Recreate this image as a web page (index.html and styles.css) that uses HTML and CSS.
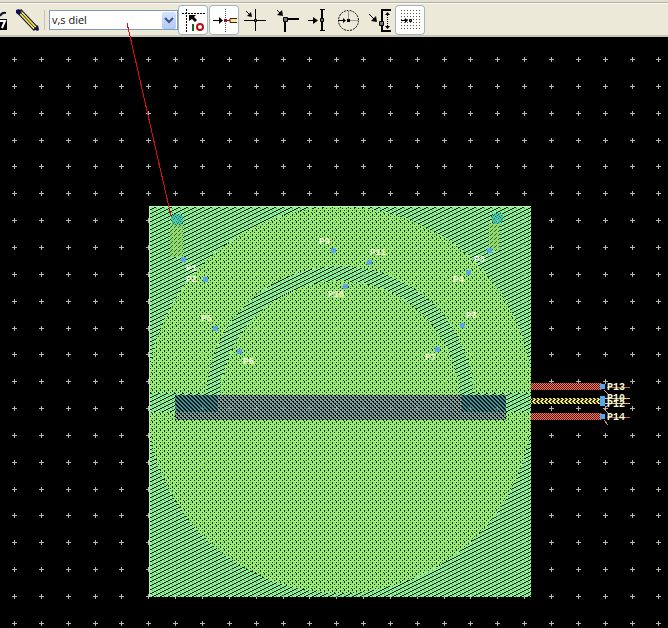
FILE: index.html
```html
<!DOCTYPE html>
<html lang="en">
<head>
<meta charset="utf-8">
<title>Layout editor</title>
<link rel="stylesheet" href="styles.css">
</head>
<body>
<header class="toolbar">
  <button class="tool tool-cut" aria-label="Layer 7"><svg width="8" height="30"><path d="M0 11q2-4 6-3" fill="none" stroke="#113" stroke-width="2"/><path d="M0 14h7v11H0z" fill="#000"/><path d="M0 16h5l-3 7" fill="none" stroke="#fff" stroke-width="2"/></svg></button>
  <button class="tool tool-pencil" aria-label="Draw"><svg width="24" height="30"><path d="M3 6L20 24" stroke="#113" stroke-width="6"/><path d="M4 7L19 23" stroke="#f1e65c" stroke-width="4"/><path d="M4 7L19 23" stroke="#332" stroke-width="1"/><path d="M0 5l3-1 3 3-3 3-3-2zM18 24l4-4 1 5-2 1z" fill="#115"/></svg></button>
  <label class="layer-picker">
    <select aria-label="Entry layer"><option>v,s diel</option></select>
    <svg class="chevron" width="14" height="17"><path d="M3 6l4 4 4-4" fill="none" stroke="#3f5680" stroke-width="2"/></svg>
  </label>
  <div class="snaps">
    <button class="tool active" aria-label="Snap enabled"><svg width="30" height="30"><path d="M4 8.500h24M8.500 4v24" stroke="#000" stroke-dasharray="2 1"/><path d="M11 10h7l-2 2 3 3-2 2-3-3-3 2z"/><path d="M15 19v7" stroke="#186418" stroke-width="2"/><circle cx="22" cy="22" r="3" fill="none" stroke="#b51218" stroke-width="2"/></svg></button>
    <button class="tool active" aria-label="Pin snap"><svg width="30" height="30"><path d="M4 15.500h8" stroke="#000"/><path d="M10 12l4 3.500-4 3.500z"/><path d="M16.500 4v24" stroke="#555" stroke-dasharray="1 1"/><path d="M17 15.500h4" stroke="#812"/><path d="M15 14h3v3h-3z" fill="#812"/><path d="M28 13.500h-7v4h7" fill="#f6e79b" stroke="#421"/></svg></button>
    <button class="tool" aria-label="Vertex snap"><svg width="30" height="30"><path d="M4 15.500h22M15.500 4v22M6 6l5 5" stroke="#000" fill="none"/><path d="M12 12l-5-1 4-4z"/><path d="M14.500 14.500h2v2h-2z" fill="#777" stroke="#000"/></svg></button>
    <button class="tool" aria-label="Corner snap"><svg width="30" height="30"><path d="M28 14H14v13" stroke="#000" stroke-width="2" fill="none"/><path d="M6 5l4 4" stroke="#000"/><path d="M12 11l-6-1 5-5z"/><path d="M12.500 12.500h4v4h-4z" fill="#777" stroke="#000"/></svg></button>
    <button class="tool" aria-label="Edge snap"><svg width="30" height="30"><path d="M6 15.500h6" stroke="#000"/><path d="M11 12l5 3.500-5 3.500z"/><path d="M20 4v22" stroke="#000" stroke-width="2"/><path d="M18 4.500h5M18 25.500h5" stroke="#000"/><path d="M18.500 13.500h3v3h-3z" fill="#777" stroke="#000"/></svg></button>
    <button class="tool" aria-label="Center snap"><svg width="30" height="30"><circle cx="15.500" cy="15.500" r="10" fill="none" stroke="#000" stroke-dasharray="2 1"/><path d="M15.500 5v10.500H26" fill="none" stroke="#999"/><path d="M5 15.500h6" stroke="#000"/><path d="M10 13l3 2.500-3 2.500zM14 14h3v3h-3z"/></svg></button>
    <button class="tool" aria-label="Intersect snap"><svg width="30" height="30"><path d="M27 5H18v21h9" stroke="#000" stroke-width="2" fill="none"/><path d="M5 9l6 6" stroke="#000"/><path d="M13 17l-6-1 5-5z"/><path d="M15.500 16.500h4v4h-4z" fill="#777" stroke="#000"/><path d="M23.500 8v15" stroke="#000" stroke-dasharray="1 1"/><path d="M21 10l2.500-3 2.500 3zM21 21l2.500 3 2.500-3z"/></svg></button>
    <button class="tool active" aria-label="Grid snap"><svg width="30" height="30"><path d="M6 5.500h20M6 8.500h20M6 11.500h20M6 14.500h20M6 17.500h20M6 20.500h20M6 23.500h20" stroke="#555" stroke-dasharray="1 2"/><path d="M6 15.500h5" stroke="#000"/><path d="M10 13l3 2.500-3 2.500z"/><path d="M14.500 14.500h2v2h-2z" fill="#777" stroke="#000"/></svg></button>
  </div>
</header>
<main class="workspace">
  <svg class="drawing" role="img" aria-label="Layout drawing" shape-rendering="crispEdges">
    <defs>
      <pattern id="hatch" width="8" height="4" patternUnits="userSpaceOnUse">
        <path fill="#90f09a" d="M0 0h8v4H0z"/>
        <path fill="#04240c" d="M0 3h2v1H0zM2 2h2v1H2zM4 1h2v1H4zM6 0h2v1H6z"/>
        <path fill="#4d9a5c" d="M0 1h1v1H0zM4 3h1v1H4z"/>
      </pattern>
      <pattern id="disc" width="8" height="8" patternUnits="userSpaceOnUse">
        <path fill="#98ec76" d="M0 0h8v8H0z"/>
        <path fill="#103810" d="M0 0h1v2H0zM4 1h1v2H4zM2 3h1v1H2zM6 3h1v1H6zM0 5h1v1H0zM4 5h1v2H4zM2 7h1v1H2zM7 7h1v1H7z"/>
        <path fill="#bce64c" d="M2 1h2v1H2zM6 6h2v1H6zM1 4h2v1H1z"/>
        <path fill="#74b080" d="M6 1h1v1H6zM2 5h1v1H2z"/>
      </pattern>
      <pattern id="bar" width="4" height="4" patternUnits="userSpaceOnUse">
        <path fill="#84a098" d="M0 0h4v4H0z"/>
        <path fill="#041214" d="M0 0h2v1H0zM1 1h1v1H1zM2 2h2v1H2zM3 3h1v1H3z"/>
      </pattern>
      <pattern id="pad" width="4" height="4" patternUnits="userSpaceOnUse">
        <path fill="#4d9694" d="M0 0h4v4H0z"/>
        <path fill="#031820" d="M0 0h2v1H0zM1 1h2v1H1zM2 2h2v1H2zM3 3h1v1H3zM0 3h1v1H0z"/>
      </pattern>
      <pattern id="via" width="4" height="4" patternUnits="userSpaceOnUse">
        <path fill="#4cc8a8" d="M0 0h4v4H0z"/>
        <path fill="#1a7068" d="M0 0h1v1H0zM2 1h1v1H2zM1 2h1v1H1zM3 3h1v1H3z"/>
      </pattern>
      <pattern id="red" width="2" height="2" patternUnits="userSpaceOnUse">
        <path fill="#5a1a10" d="M0 0h2v2H0z"/><path fill="#f27568" d="M0 0h1v1H0zM1 1h1v1H1z"/>
      </pattern>
      <pattern id="yellow" width="4" height="4" patternUnits="userSpaceOnUse">
        <path fill="#282400" d="M0 0h4v4H0z"/><path fill="#f0ea78" d="M0 0h2v1H0zM1 1h2v1H1zM2 2h2v1H2zM1 3h2v1H1z"/>
      </pattern>
      <pattern id="strip" width="4" height="4" patternUnits="userSpaceOnUse">
        <path fill="#94d870" d="M0 0h4v4H0z"/><path fill="#2a6428" d="M0 0h1v1H0zM2 2h1v1H2zM3 1h1v1H3z"/>
      </pattern>
      <clipPath id="board"><path d="M149 169h382v391H149z"/></clipPath>
    </defs>
    <path id="grid" stroke="#b8b8b8"/>
    <g clip-path="url(#board)">
      <path fill="url(#hatch)" d="M149 169h382v391H149z"/>
      <circle fill="url(#disc)" cx="340" cy="363" r="193"/>
      <path fill="url(#hatch)" d="M206 363a134 134 0 0 1 268 0h-15a119 119 0 0 0-238 0zM149 356h382v19H149z"/>
      <path fill="url(#disc)" d="M175 340h31v16h-31zM221 340h238v18H221z"/>
      <path fill="url(#strip)" d="M170 186h13v34h-13zM489 186h11v28h-11z"/>
      <path fill="url(#bar)" d="M175 358h331v25H175z"/>
      <path fill="url(#pad)" d="M175 358h43v17h-43zM462 358h44v17h-44z"/>
      <path fill="url(#via)" d="M171 180l2-3h8l2 3v5l-3 3h-8zM491 179l3-3h7l2 3v4l-3 4h-7z"/>
    </g>
    <path id="grid-over" stroke="#a5edc0" opacity="0.3" clip-path="url(#board)"/>
    <path d="M149.500 560v-391M149 169.500h382" fill="none" stroke="#bdebb0"/>
    <path fill="url(#red)" d="M531 346h71v7h-71zM531 376h71v7h-71z"/>
    <path fill="url(#yellow)" d="M531 361h70v6h-70z"/>
    <path d="M607 350.500h23M607 380.500h23" stroke="#b46a4c"/>
    <path d="M604 361.500h26M604 366.500h26" stroke="#d6cf7c"/>
    <path d="M604 353l5 5M604 372l5-5M604 383l4 5M604 372l5 5" stroke="#c99a80"/>
    <g id="pins" fill="#5aa4ea"></g>
    <g class="pin-labels">
      <text x="186" y="234">P1</text><text x="186" y="245">P2</text><text x="201" y="284">P5</text><text x="243" y="327">P6</text>
      <text x="319" y="207">P9</text><text x="370" y="218">P11</text><text x="328" y="260">P10</text>
      <text x="474" y="225">P3</text><text x="453" y="245">P4</text><text x="466" y="281">P8</text><text x="425" y="323">P7</text>
    </g>
    <g class="port-labels">
      <text x="607" y="353">P13</text><text x="607" y="364">P10</text><text x="607" y="370">P12</text><text x="607" y="383">P14</text>
    </g>
  </svg>
</main>
<svg class="callout" width="668" height="628" aria-hidden="true" shape-rendering="crispEdges"><path d="M127 23L171 216" stroke="#e00c10"/></svg>
<script src="drawing.js"></script>
</body>
</html>
```
FILE: styles.css
```css
* { box-sizing: border-box; }
body {
  margin: 0;
  min-height: 100vh;
  display: flex;
  flex-direction: column;
  position: relative;
  background: #000;
  overflow: hidden;
}
.toolbar {
  height: 37px;
  flex: none;
  display: flex;
  align-items: center;
  padding-top: 3px;
  background: linear-gradient(#e3dfd0 0 2px, #b5b2a5 2px 3px, #fbfaf4 3px 4px, #ece9d8 4px 35px, #c9c6b6 35px);
}
.tool {
  width: 30px;
  height: 30px;
  padding: 0;
  border: 0;
  background: none;
  display: flex;
  flex: none;
}
.tool svg { display: block; flex: none; }
.tool-cut { width: 8px; }
.tool-pencil { width: 24px; margin-left: 8px; }
.layer-picker {
  display: grid;
  align-items: center;
  width: 134px;
  margin-left: 4px;
  padding-left: 4px;
  border-left: 1px solid #c6c3b3;
  flex: none;
}
.layer-picker select {
  grid-area: 1 / 1;
  appearance: none;
  width: 129px;
  height: 20px;
  padding: 0 18px 0 2px;
  border: 1px solid #7f9db9;
  border-radius: 0;
  background: #fff;
  color: #111;
  font: 11px/16px "Open Sans", "Noto Sans", sans-serif;
}
.chevron {
  grid-area: 1 / 1;
  justify-self: end;
  margin-right: 2px;
  border-radius: 2px;
  background: linear-gradient(#d5e1fc, #b2c8f5);
  pointer-events: none;
}
.snaps { display: flex; gap: 1px; }
.active {
  border-radius: 4px;
  background: #fdfdfb;
  box-shadow: inset 0 0 0 1px #a3b4c4;
}
.workspace { flex: 1; display: flex; }
.drawing { display: block; width: 100%; height: auto; flex: 1; }
.pin-labels, .port-labels {
  font-family: "Liberation Mono", monospace;
  font-weight: bold;
  fill: #fbf9dc;
}
.pin-labels { font-size: 9px; }
.port-labels { font-size: 10px; }
.callout {
  position: absolute;
  top: 0;
  left: 0;
  pointer-events: none;
}
```
FILE: drawing.js
```js
// Grid marks repeat every 26.85 px; each one is snapped to a whole pixel.
const pitch = 26.85;
const marks = [];
for (let row = 0; row < 60; row++) {
  for (let col = 0; col < 80; col++) {
    const x = Math.round(14 + col * pitch);
    const y = Math.round(22 + row * pitch);
    marks.push(`M${x - 2} ${y + 0.5}h5M${x + 0.5} ${y - 2}v5`);
  }
}
document.getElementById('grid').setAttribute('d', marks.join(''));
document.getElementById('grid-over').setAttribute('d', marks.join(''));

const pins = [
  [181, 220], [203, 240], [213, 289], [237, 312],
  [331, 211], [367, 223], [343, 247],
  [487, 211], [466, 233], [460, 286], [435, 310],
  [600, 347], [600, 359], [600, 364], [600, 377]
];
document.getElementById('pins').innerHTML = pins
  .map(([x, y]) => `<rect x="${x}" y="${y}" width="5" height="5"/>`)
  .join('');
```
